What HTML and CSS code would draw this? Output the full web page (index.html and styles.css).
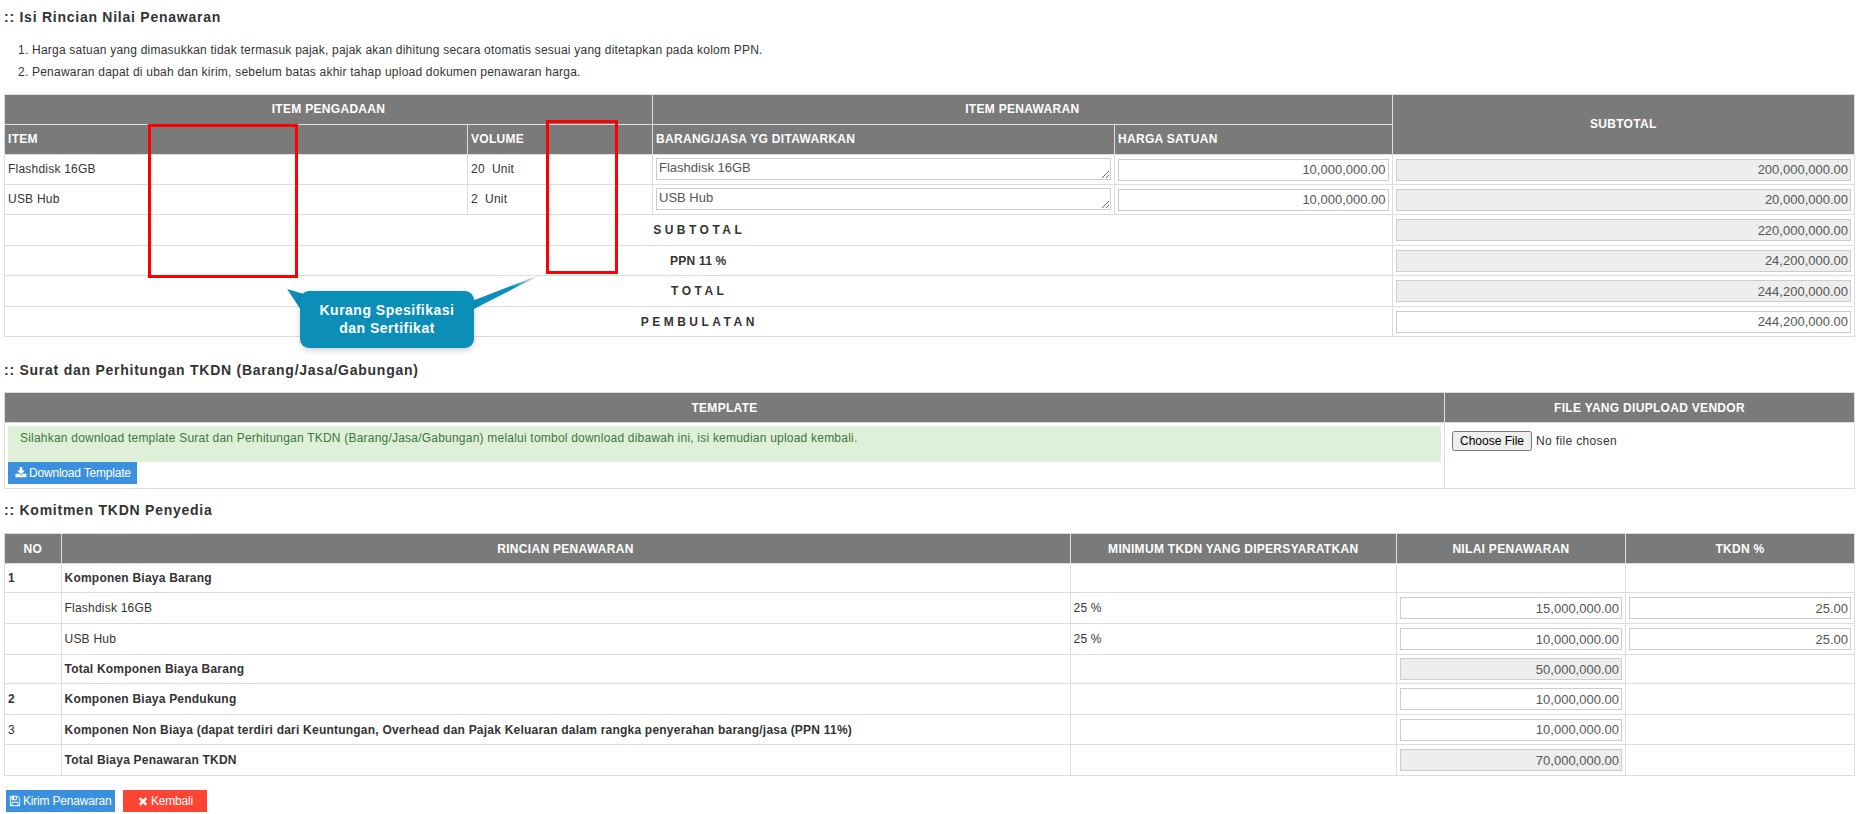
FILE: index.html
```html
<!DOCTYPE html>
<html lang="id">
<head>
<meta charset="utf-8">
<title>Isi Rincian Nilai Penawaran</title>
<link rel="stylesheet" href="styles.css">
</head>
<body>
<h3 class="section-title first">:: Isi Rincian Nilai Penawaran</h3>
<ol class="notes">
  <li>Harga satuan yang dimasukkan tidak termasuk pajak, pajak akan dihitung secara otomatis sesuai yang ditetapkan pada kolom PPN.</li>
  <li>Penawaran dapat di ubah dan kirim, sebelum batas akhir tahap upload dokumen penawaran harga.</li>
</ol>

<table class="grid offer">
  <colgroup><col class="c1"><col class="c2"><col class="c3"><col class="c4"><col class="c5"></colgroup>
  <thead>
    <tr class="h30"><th colspan="2">ITEM PENGADAAN</th><th colspan="2">ITEM PENAWARAN</th><th rowspan="2">SUBTOTAL</th></tr>
    <tr class="h30"><th class="left">ITEM</th><th class="left">VOLUME</th><th class="left">BARANG/JASA YG DITAWARKAN</th><th class="left">HARGA SATUAN</th></tr>
  </thead>
  <tbody>
    <tr class="h30">
      <td class="item">Flashdisk 16GB</td><td class="item">20&nbsp; Unit</td>
      <td class="pad"><textarea class="field area">Flashdisk 16GB</textarea></td>
      <td class="pad"><input class="field" value="10,000,000.00"></td>
      <td class="pad"><input class="field off" value="200,000,000.00" disabled></td>
    </tr>
    <tr class="h30">
      <td class="item">USB Hub</td><td class="item">2&nbsp; Unit</td>
      <td class="pad"><textarea class="field area">USB Hub</textarea></td>
      <td class="pad"><input class="field" value="10,000,000.00"></td>
      <td class="pad"><input class="field off" value="20,000,000.00" disabled></td>
    </tr>
    <tr class="h31"><td colspan="4" class="label wide">SUBTOTAL</td><td class="pad"><input class="field off" value="220,000,000.00" disabled></td></tr>
    <tr class="h30"><td colspan="4" class="label">PPN 11 %</td><td class="pad"><input class="field off" value="24,200,000.00" disabled></td></tr>
    <tr class="h31"><td colspan="4" class="label wide">TOTAL</td><td class="pad"><input class="field off" value="244,200,000.00" disabled></td></tr>
    <tr class="h30"><td colspan="4" class="label wide">PEMBULATAN</td><td class="pad"><input class="field" value="244,200,000.00"></td></tr>
  </tbody>
</table>

<h3 class="section-title second">:: Surat dan Perhitungan TKDN (Barang/Jasa/Gabungan)</h3>
<table class="grid upload">
  <colgroup><col class="u1"><col class="u2"></colgroup>
  <thead><tr class="h30"><th>TEMPLATE</th><th>FILE YANG DIUPLOAD VENDOR</th></tr></thead>
  <tbody>
    <tr>
      <td class="template-cell">
        <div class="alert">Silahkan download template Surat dan Perhitungan TKDN (Barang/Jasa/Gabungan) melalui tombol download dibawah ini, isi kemudian upload kembali.</div>
        <a class="btn blue download" href="#"><svg class="ico" viewBox="0 0 1792 1792"><path d="M1344 1344q0-26-19-45t-45-19-45 19-19 45 19 45 45 19 45-19 19-45zm256 0q0-26-19-45t-45-19-45 19-19 45 19 45 45 19 45-19 19-45zm128-224v320q0 40-28 68t-68 28h-1472q-40 0-68-28t-28-68v-320q0-40 28-68t68-28h465l135 136q58 56 136 56t136-56l136-136h464q40 0 68 28t28 68zm-325-569q17 41-14 70l-448 448q-18 19-45 19t-45-19l-448-448q-31-29-14-70 17-39 59-39h256v-448q0-26 19-45t45-19h256q26 0 45 19t19 45v448h256q42 0 59 39z"/></svg>Download Template</a>
      </td>
      <td class="file-cell"><input class="file" type="file"></td>
    </tr>
  </tbody>
</table>

<h3 class="section-title third">:: Komitmen TKDN Penyedia</h3>
<table class="grid commit">
  <colgroup><col class="k1"><col class="k2"><col class="k3"><col class="k4"><col class="k5"></colgroup>
  <thead><tr class="h30"><th>NO</th><th>RINCIAN PENAWARAN</th><th>MINIMUM TKDN YANG DIPERSYARATKAN</th><th>NILAI PENAWARAN</th><th>TKDN %</th></tr></thead>
  <tbody>
    <tr class="h29"><td class="strong">1</td><td class="strong">Komponen Biaya Barang</td><td></td><td></td><td></td></tr>
    <tr class="h31"><td></td><td>Flashdisk 16GB</td><td>25 %</td><td><input class="field" value="15,000,000.00"></td><td><input class="field" value="25.00"></td></tr>
    <tr class="h31"><td></td><td>USB Hub</td><td>25 %</td><td><input class="field" value="10,000,000.00"></td><td><input class="field" value="25.00"></td></tr>
    <tr class="h29"><td></td><td class="strong">Total Komponen Biaya Barang</td><td></td><td><input class="field off" value="50,000,000.00" disabled></td><td></td></tr>
    <tr class="h31"><td class="strong">2</td><td class="strong">Komponen Biaya Pendukung</td><td></td><td><input class="field" value="10,000,000.00"></td><td></td></tr>
    <tr class="h30"><td>3</td><td class="strong">Komponen Non Biaya (dapat terdiri dari Keuntungan, Overhead dan Pajak Keluaran dalam rangka penyerahan barang/jasa (PPN 11%)</td><td></td><td><input class="field" value="10,000,000.00"></td><td></td></tr>
    <tr class="h31"><td></td><td class="strong">Total Biaya Penawaran TKDN</td><td></td><td><input class="field off" value="70,000,000.00" disabled></td><td></td></tr>
  </tbody>
</table>

<div class="actions">
  <a class="btn blue send" href="#"><svg class="ico" viewBox="0 0 1792 1792"><path d="M512 1536h768v-384h-768v384zm896 0h128v-896q0-14-10-38.500t-20-34.500l-281-281q-10-10-34-20t-39-10v416q0 40-28 68t-68 28h-576q-40 0-68-28t-28-68v-416h-128v1280h128v-416q0-40 28-68t68-28h832q40 0 68 28t28 68v416zm-384-928v-320q0-13-9.500-22.500t-22.500-9.500h-192q-13 0-22.500 9.500t-9.500 22.500v320q0 13 9.500 22.500t22.500 9.500h192q13 0 22.500-9.500t9.500-22.500zm640 32v928q0 40-28 68t-68 28h-1344q-40 0-68-28t-28-68v-1344q0-40 28-68t68-28h928q40 0 88 20t76 48l280 280q28 28 48 76t20 88z"/></svg>Kirim Penawaran</a>
  <a class="btn red back" href="#"><svg class="ico" viewBox="0 0 1792 1792"><path d="M1490 1322q0 40-28 68l-136 136q-28 28-68 28t-68-28l-294-294-294 294q-28 28-68 28t-68-28l-136-136q-28-28-28-68t28-68l294-294-294-294q-28-28-28-68t28-68l136-136q28-28 68-28t68 28l294 294 294-294q28-28 68-28t68 28l136 136q28 28 28 68t-28 68l-294 294 294 294q28 28 28 68z"/></svg>Kembali</a>
</div>

<div class="mark mark-a"></div>
<div class="mark mark-b"></div>

<div class="callout">
  <svg class="tails" viewBox="0 0 265 85">
    <defs>
      <linearGradient id="fadeR" x1="1" y1="0" x2="0" y2="1">
        <stop offset="0" stop-color="#0b8fb9" stop-opacity="0"/>
        <stop offset="0.4" stop-color="#0b8fb9"/>
      </linearGradient>
    </defs>
    <polygon points="7,19 21,40 24,24" fill="#0b8fb9"/>
    <polygon points="262,4 192,31 192,40" fill="url(#fadeR)"/>
  </svg>
  <div class="bubble">Kurang Spesifikasi<br>dan Sertifikat</div>
</div>
</body>
</html>
```
FILE: styles.css
```css
* { box-sizing: border-box; }
html, body { margin: 0; padding: 0; }
body {
  position: relative;
  height: 814px;
  overflow: hidden;
  padding: 7px 4px 0 4px;
  background: #fff;
  color: #333;
  font: 12px/16px "Liberation Sans", Arial, sans-serif;
  letter-spacing: 0.22px;
}
.section-title {
  margin: 0;
  font-size: 14px;
  line-height: 20px;
  font-weight: 700;
  letter-spacing: 0.75px;
  color: #333;
}
.second { margin-top: 23px; }
.third { margin-top: 11px; }
.notes {
  margin: 12px 0 11px;
  padding: 0 0 0 28px;
}
.notes li { line-height: 22px; }

.grid {
  width: 1850px;
  table-layout: fixed;
  border-collapse: collapse;
  margin-top: 12px;
}
.offer { margin-top: 0; }
.commit { margin-top: 13px; }
.grid th, .grid td {
  border: 1px solid #ddd;
  padding: 0 3px;
  vertical-align: middle;
}
.grid th {
  background: #7a7a7a;
  color: #fff;
  font-weight: 700;
  letter-spacing: 0.3px;
  text-align: center;
}
.grid th.left { text-align: left; }
.offer th { padding-bottom: 2px; }
.grid td.item { padding-bottom: 2px; }
.h29 { height: 29px; }
.h30 { height: 30px; }
.h31 { height: 31px; }
.strong { font-weight: 700; }
.label { text-align: center; font-weight: 700; }
.grid td.wide { letter-spacing: 3.5px; padding-left: 5px; }
.c1 { width: 463px; } .c2 { width: 185px; } .c3 { width: 462px; } .c4 { width: 277.5px; } .c5 { width: 462.5px; }
.u1 { width: 1440px; } .u2 { width: 410px; }
.k1 { width: 56.5px; } .k2 { width: 1009px; } .k3 { width: 326.5px; } .k4 { width: 229px; } .k5 { width: 229px; }

.field {
  display: block;
  width: 100%;
  height: 22px;
  margin: 0;
  padding: 0 2px 0 3px;
  border: 1px solid #ccc;
  background: #fff;
  color: #555;
  font: 13px/16px "Liberation Sans", Arial, sans-serif;
  letter-spacing: 0;
  text-align: right;
}
.off { background: #eee; opacity: 1; -webkit-text-fill-color: #555; }
.area { text-align: left; padding: 1px 2px 0; margin-bottom: 2px; resize: both; overflow: hidden; }

.grid td.template-cell { padding: 3px 3px 4px; vertical-align: top; }
.alert {
  height: 36px;
  padding: 4px 12px;
  background: #dff0d8;
  color: #3c763d;
  letter-spacing: 0.215px;
}
.grid td.file-cell { padding: 8px 7px; vertical-align: top; height: 65px; }
.file {
  display: block;
  font: 12px "Liberation Sans", Arial, sans-serif;
  letter-spacing: 0.35px;
  color: #333;
}
.btn {
  display: inline-flex;
  align-items: center;
  height: 22px;
  color: #fff;
  text-decoration: none;
  letter-spacing: -0.2px;
}
.blue { background: #3a8fdf; }
.red { background: #ff4433; }
.ico { width: 12px; height: 12px; fill: #fff; margin-right: 2px; flex: none; }
.download { width: 129px; padding-left: 7px; }
.actions { display: flex; gap: 8px; margin: 14px 0 0 2px; }
.send { width: 109px; padding-left: 3px; }
.back { width: 84px; padding-left: 14px; }

.mark { position: absolute; border: 3px solid #f00; }
.mark-a { left: 148px; top: 124px; width: 150px; height: 154px; }
.mark-b { left: 546px; top: 120px; width: 72px; height: 154px; }

.callout { position: absolute; left: 280px; top: 270px; width: 265px; height: 85px; }
.tails { position: absolute; left: 0; top: 0; width: 265px; height: 85px; }
.bubble {
  position: absolute;
  left: 20px;
  top: 21px;
  width: 174px;
  height: 57px;
  padding-top: 10px;
  border-radius: 9px;
  background: #0b8fb9;
  box-shadow: 0 2px 6px rgba(0, 0, 0, 0.2);
  color: #fff;
  font-size: 14px;
  font-weight: 700;
  line-height: 18px;
  letter-spacing: 0.5px;
  text-align: center;
}
```
